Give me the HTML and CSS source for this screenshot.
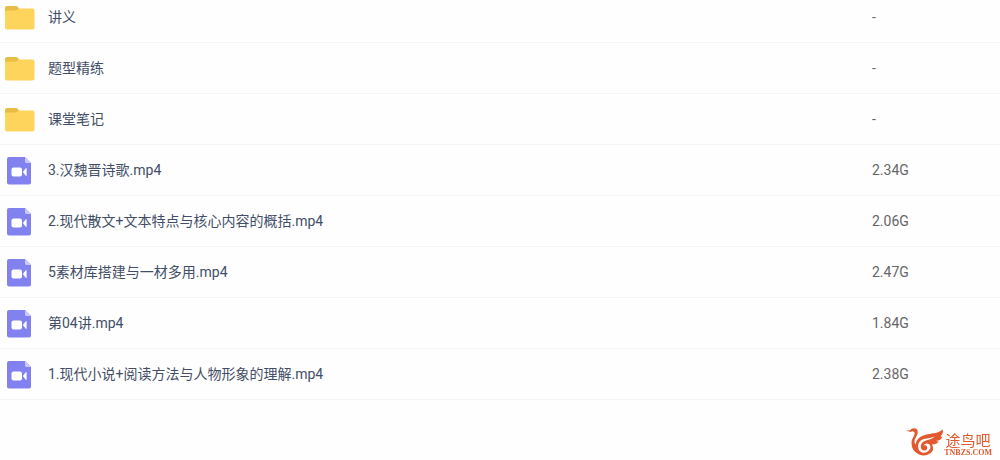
FILE: index.html
```
<!DOCTYPE html>
<html lang="zh-CN">
<head>
    <meta charset="UTF-8">
    <meta name="viewport" content="width=device-width, initial-scale=1.0">
    <title>文件列表</title>
    <link rel="stylesheet" href="styles.css">
</head>
<body>
    <!-- 图标定义 -->
    <svg class="icon-defs" aria-hidden="true">
        <symbol id="icon-folder" viewBox="0 0 30 26">
            <path fill="#e9bd45" d="M0 12V3a2 2 0 0 1 2-2h9a2 2 0 0 1 1.600.8L14.500 4v8z"/>
            <path fill="#ffd45c" d="M0 7a1.500 1.500 0 0 1 1.500-1.500H11L14 3.500h13.500A2 2 0 0 1 29.500 5.500v17a2 2 0 0 1-2 2H2a2 2 0 0 1-2-2z"/>
        </symbol>
        <symbol id="icon-video" viewBox="0 0 24 28">
            <path fill="#8182ef" d="M2 0h16l6 6v19.500a2 2 0 0 1-2 2H2a2 2 0 0 1-2-2V2a2 2 0 0 1 2-2z"/>
            <path fill="#c9c9fb" d="M18 0l6 6h-4.500A1.500 1.500 0 0 1 18 4.500z"/>
            <rect fill="#fff" x="4.500" y="10.500" width="10.500" height="9" rx="2"/>
            <path fill="#fff" d="M15.800 15l3-3.700q.8-.7.800.4v6.600q0 1.100-.8.400z"/>
        </symbol>
    </svg>

    <!-- 文件列表 -->
    <table class="file-list">
        <tbody>
            <tr>
                <td class="icon"><svg class="folder"><use href="#icon-folder"/></svg></td>
                <td class="name"><a href="#">讲义</a></td>
                <td class="size">-</td>
            </tr>
            <tr>
                <td class="icon"><svg class="folder"><use href="#icon-folder"/></svg></td>
                <td class="name"><a href="#">题型精练</a></td>
                <td class="size">-</td>
            </tr>
            <tr>
                <td class="icon"><svg class="folder"><use href="#icon-folder"/></svg></td>
                <td class="name"><a href="#">课堂笔记</a></td>
                <td class="size">-</td>
            </tr>
            <tr>
                <td class="icon"><svg class="video"><use href="#icon-video"/></svg></td>
                <td class="name"><a href="#">3.汉魏晋诗歌.mp4</a></td>
                <td class="size">2.34G</td>
            </tr>
            <tr>
                <td class="icon"><svg class="video"><use href="#icon-video"/></svg></td>
                <td class="name"><a href="#">2.现代散文+文本特点与核心内容的概括.mp4</a></td>
                <td class="size">2.06G</td>
            </tr>
            <tr>
                <td class="icon"><svg class="video"><use href="#icon-video"/></svg></td>
                <td class="name"><a href="#">5素材库搭建与一材多用.mp4</a></td>
                <td class="size">2.47G</td>
            </tr>
            <tr>
                <td class="icon"><svg class="video"><use href="#icon-video"/></svg></td>
                <td class="name"><a href="#">第04讲.mp4</a></td>
                <td class="size">1.84G</td>
            </tr>
            <tr>
                <td class="icon"><svg class="video"><use href="#icon-video"/></svg></td>
                <td class="name"><a href="#">1.现代小说+阅读方法与人物形象的理解.mp4</a></td>
                <td class="size">2.38G</td>
            </tr>
        </tbody>
    </table>

    <!-- 站点水印 -->
    <div class="watermark">
        <svg class="bird" viewBox="0 0 38 30" aria-hidden="true">
            <path fill="#e2592f" d="M0 4Q2.500 3 4 3.200Q5.500.8 8.500 1.200Q12 1.800 11.800 5.500Q11.500 8 9.500 11Q7.500 14.500 9.500 17.500Q10.500 12 15 9.500Q20 7 26 6.500Q33 6 36.500 2.500Q38 6 34.500 9.500Q36 10 36.500 9.500Q35 13.500 30 14Q32 14.700 33 14.200Q30.500 17.500 26 17.500Q29 23 24 26.500Q19 30 13 27.500Q5.500 24 5.500 16Q5.500 12.500 7.500 9.500Q9.500 6.500 8 4.800Q6.500 3.500 4.500 5Q2.500 4.200 0 4z"/>
            <path fill="#fff" d="M12 20Q12 13.500 18 12Q24 11 29 9.500Q25 13 20 13.500Q14.500 15 14.800 20Q15.500 24 19 23.500Q22 22.500 21 19.500Q20 17.500 17.500 18.500Q19.500 15.500 23 17Q26 20 23 23.500Q20 26.500 16 25.500Q12.500 24 12 20z"/>
        </svg>
        <div class="brand">
            <span class="brand-name">途鸟吧</span>
            <span class="brand-url">TNBZS.COM</span>
        </div>
    </div>
</body>
</html>
```
FILE: styles.css
```
body {
    margin: 0;
    background-color: #fefefe;
    font-family: Roboto, "Noto Sans CJK SC", sans-serif;
    font-size: 14px;
    color: #424e67;
    overflow: hidden;
}

.icon-defs {
    display: none;
}

/* 文件列表，首行略微滚出顶部 */
.file-list {
    width: 100%;
    margin-top: -8px;
    border-collapse: collapse;
    table-layout: fixed;
}

.file-list td {
    height: 50px;
    padding: 0;
    border-bottom: 1px solid #f4f5f7;
    line-height: 20px;
    vertical-align: middle;
}

.file-list .icon {
    width: 48px;
}

.file-list .icon svg {
    display: block;
}

.folder {
    width: 30px;
    height: 26px;
    margin-top: 2px;
    margin-left: 5px;
}

.video {
    width: 24px;
    height: 28px;
    margin-top: 2px;
    margin-left: 7px;
}

.name a {
    color: inherit;
    text-decoration: none;
}

.name a:hover {
    color: #8182ef;
}

.file-list .size {
    width: 128px;
    color: #666;
}

/* 右下角水印 */
.watermark {
    position: fixed;
    right: 8px;
    bottom: 3px;
    display: flex;
    align-items: flex-end;
    color: #e2592f;
}

.bird {
    width: 38px;
    height: 30px;
}

.brand {
    display: flex;
    flex-direction: column;
    align-items: center;
}

.brand-name {
    font-family: "Noto Sans CJK SC", sans-serif;
    font-size: 15px;
    line-height: 16px;
    padding-bottom: 1px;
}

.brand-url {
    font-family: "Liberation Serif", serif;
    font-size: 8px;
    font-weight: bold;
    line-height: 8px;
}
```
